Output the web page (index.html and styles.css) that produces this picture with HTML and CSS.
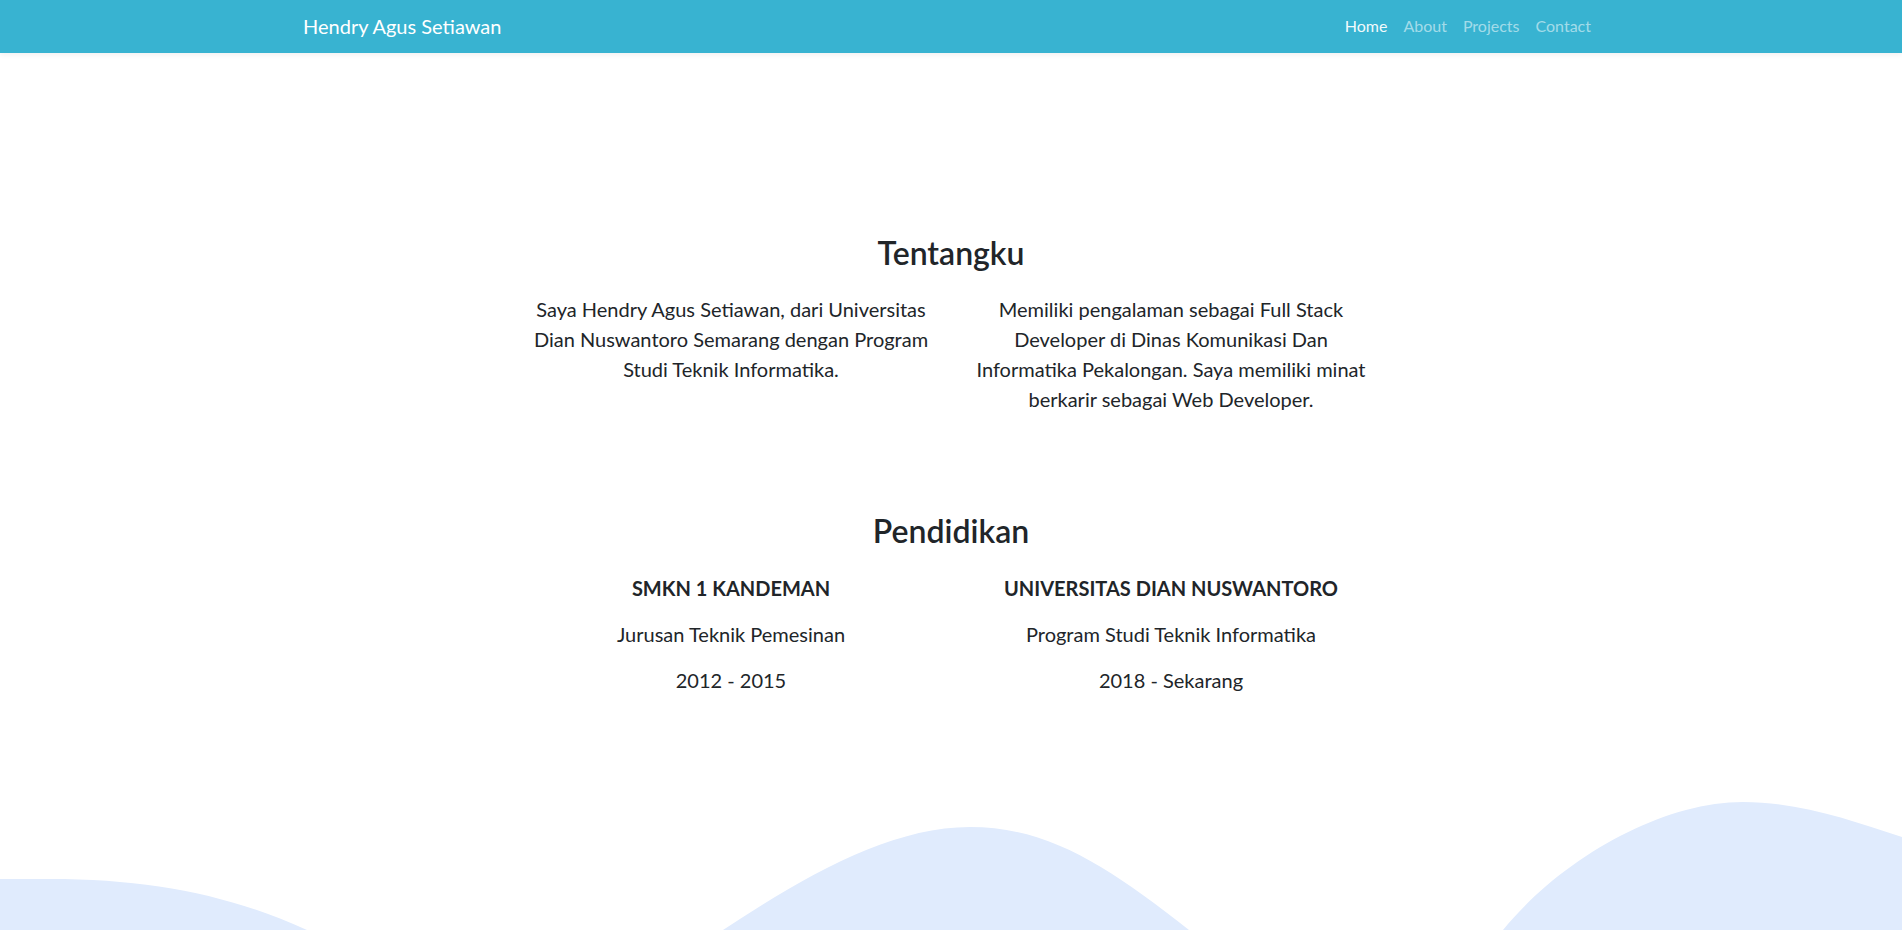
FILE: index.html
```html
<!DOCTYPE html>
<html lang="id">
<head>
<meta charset="utf-8">
<title>Hendry Agus Setiawan</title>
<link rel="stylesheet" href="styles.css">
</head>
<body>
<div class="page">
  <nav class="navbar">
    <div class="nav-inner">
      <a class="brand" href="#">Hendry Agus Setiawan</a>
      <ul class="nav-links">
        <li><a class="nav-link active" href="#">Home</a></li>
        <li><a class="nav-link" href="#">About</a></li>
        <li><a class="nav-link" href="#">Projects</a></li>
        <li><a class="nav-link" href="#">Contact</a></li>
      </ul>
    </div>
  </nav>
  <main class="main">
    <section class="section">
      <h2 class="section-title">Tentangku</h2>
      <div class="row">
        <div class="col"><p class="text">Saya Hendry Agus Setiawan, dari Universitas Dian Nuswantoro Semarang dengan Program Studi Teknik Informatika.</p></div>
        <div class="col"><p class="text">Memiliki pengalaman sebagai Full Stack Developer di Dinas Komunikasi Dan Informatika Pekalongan. Saya memiliki minat berkarir sebagai Web Developer.</p></div>
      </div>
    </section>
    <section class="section section-edu">
      <h2 class="section-title">Pendidikan</h2>
      <div class="row">
        <div class="col">
          <p class="text strong">SMKN 1 KANDEMAN</p>
          <p class="text">Jurusan Teknik Pemesinan</p>
          <p class="text">2012 - 2015</p>
        </div>
        <div class="col">
          <p class="text strong">UNIVERSITAS DIAN NUSWANTORO</p>
          <p class="text">Program Studi Teknik Informatika</p>
          <p class="text">2018 - Sekarang</p>
        </div>
      </div>
    </section>
  </main>
  <svg class="wave" viewBox="0 0 1902 150" preserveAspectRatio="none" aria-hidden="true">
    <path class="wave-fill" d="M0,99 L50,99 C150,99 230,115 307,150 C384,185 450,250 520,250 C610,250 660,195 723,150 C805,96 890,47 970,47 C1050,47 1110,88 1189,150 C1250,200 1290,250 1345,250 C1410,250 1455,200 1503,150 C1560,80 1660,22 1743,22 C1800,22 1850,40 1902,57 L1902,300 L0,300 Z"/>
  </svg>
</div>
</body>
</html>
```
FILE: styles.css
```css
* { box-sizing: border-box; }
html, body { margin: 0; padding: 0; }
body {
  font-family: Lato, "Noto Sans", sans-serif;
  color: #212529;
  background: #fff;
}
.page {
  height: 100vh;
  display: flex;
  flex-direction: column;
  overflow: hidden;
}
.navbar {
  flex: 0 0 53px;
  background: #38b3d1;
  box-shadow: 0 2px 5px rgba(0, 0, 0, 0.06);
  position: relative;
  z-index: 1;
}
.nav-inner {
  width: 1320px;
  margin: 0 auto;
  padding: 0 12px 2px;
  height: 100%;
  display: flex;
  align-items: center;
  justify-content: space-between;
}
.brand {
  color: #fff;
  text-decoration: none;
  font-size: 20px;
  line-height: 30px;
}
.nav-links {
  list-style: none;
  margin: 0;
  padding: 0;
  display: flex;
}
.nav-link {
  display: block;
  padding: 0 8px;
  font-size: 16px;
  line-height: 24px;
  color: rgba(255, 255, 255, 0.55);
  text-decoration: none;
}
.nav-link.active { color: rgba(255, 255, 255, 0.95); }
.main {
  flex: 1;
  padding-top: 181px;
}
.section-title {
  margin: 0 0 22px;
  text-align: center;
  font-size: 32px;
  line-height: 38.4px;
  font-weight: 600;
}
.section-edu { margin-top: 82px; }
.row {
  width: 880px;
  margin: 0 auto;
  display: flex;
}
.col {
  flex: 0 0 440px;
  padding: 0 12px;
  text-align: center;
}
.text {
  margin: 0 0 16px;
  font-size: 20px;
  line-height: 30px;
}
.strong { font-weight: 700; }
.wave {
  flex: 0 0 150px;
  display: block;
  width: 100%;
  height: 150px;
}
.wave-fill { fill: #e0ebfd; }
```
